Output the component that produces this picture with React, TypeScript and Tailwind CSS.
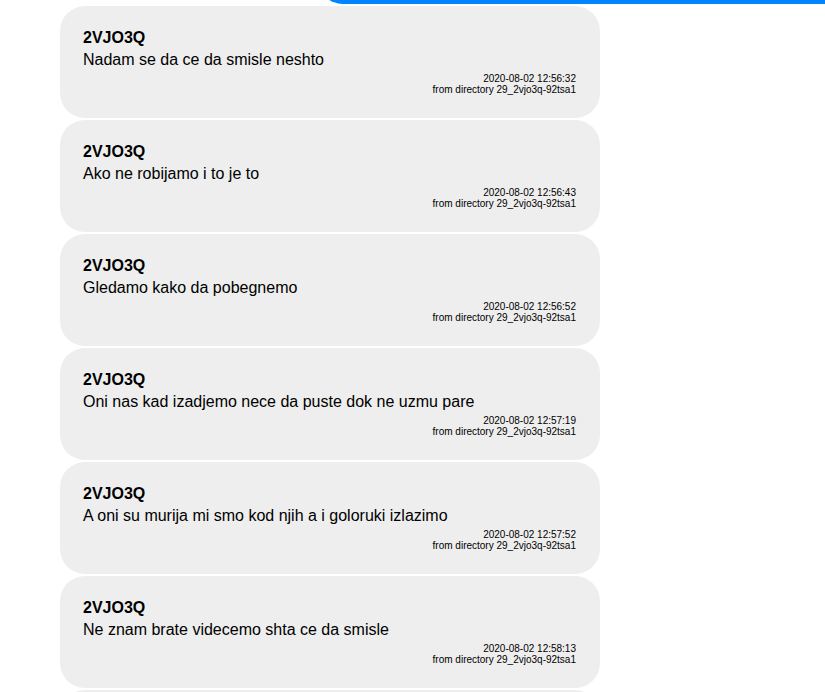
const MESSAGES = [
  { text: "Nadam se da ce da smisle neshto", time: "2020-08-02 12:56:32" },
  { text: "Ako ne robijamo i to je to", time: "2020-08-02 12:56:43" },
  { text: "Gledamo kako da pobegnemo", time: "2020-08-02 12:56:52" },
  { text: "Oni nas kad izadjemo nece da puste dok ne uzmu pare", time: "2020-08-02 12:57:19" },
  { text: "A oni su murija mi smo kod njih a i goloruki izlazimo", time: "2020-08-02 12:57:52" },
  { text: "Ne znam brate videcemo shta ce da smisle", time: "2020-08-02 12:58:13" },
];

export default function App() {
  return (
    <div className="w-full h-[692px] overflow-hidden bg-white font-['Liberation_Sans',Arial,sans-serif] text-black">
      {/* previous outgoing bubble, scrolled mostly out of view */}
      <div className="h-[4px] overflow-hidden flex flex-col justify-end">
        <div className="ml-[318px] w-[540px] h-[112px] shrink-0 rounded-[25px] bg-[#0084ff]" />
      </div>

      <div className="flex flex-col gap-[2px] pt-[2px] pl-[60px]">
        {MESSAGES.map((m, i) => (
          <div
            key={i}
            className="w-[540px] h-[112px] shrink-0 rounded-[25px] bg-[#eeeeee] pt-[21px] pl-[23px] pr-6"
          >
            <div className="text-base leading-[22px] font-bold">2VJO3Q</div>
            <div className="text-base leading-[22px]">{m.text}</div>
            <div className="mt-[2px] text-right text-[10px] leading-[11px]">
              <div>{m.time}</div>
              <div>from directory 29_2vjo3q-92tsa1</div>
            </div>
          </div>
        ))}
        {/* next bubble, only its top edge is in view */}
        <div className="w-[540px] h-[112px] shrink-0 rounded-[25px] bg-[#eeeeee]" />
      </div>
    </div>
  );
}
